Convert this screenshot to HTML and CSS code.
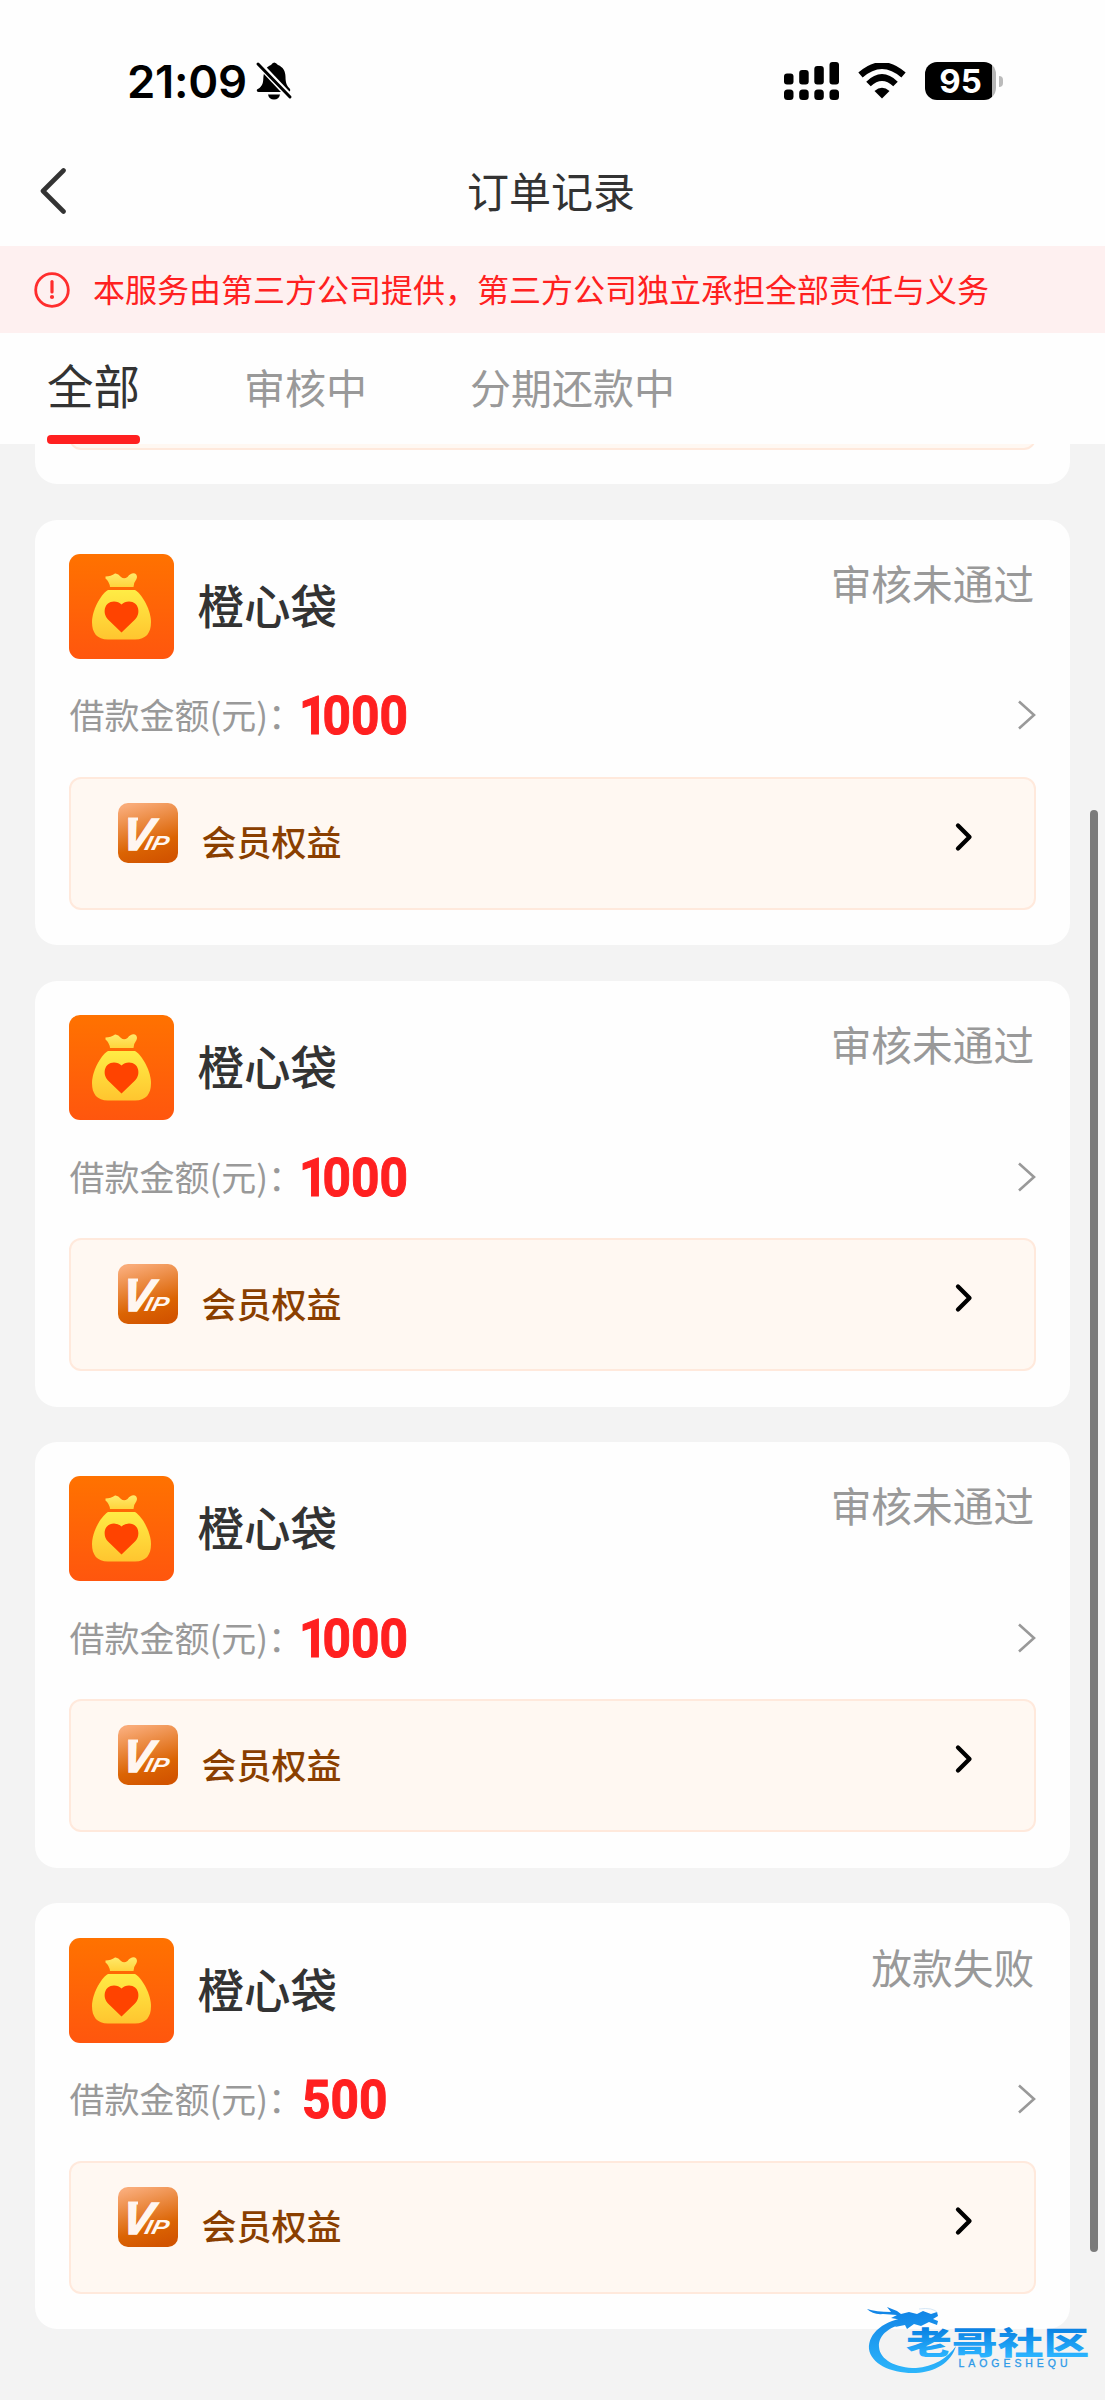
FILE: index.html
```html
<!DOCTYPE html>
<html lang="zh-CN">
<head>
<meta charset="utf-8">
<title>订单记录</title>
<link rel="stylesheet" href="styles.css">
</head>
<body>
<svg class="defs" width="0" height="0" aria-hidden="true">
  <defs>
    <linearGradient id="tile" x1="0" y1="0" x2="0" y2="1"><stop offset="0" stop-color="#ff7200"/><stop offset="1" stop-color="#ff560e"/></linearGradient>
    <linearGradient id="gold" x1="0" y1="0" x2="0" y2="1"><stop offset="0" stop-color="#ffec45"/><stop offset="1" stop-color="#ffc52f"/></linearGradient>
    <linearGradient id="tie" x1="0" y1="0" x2="0" y2="1"><stop offset="0" stop-color="#ffe96a"/><stop offset="1" stop-color="#ffd43c"/></linearGradient>
    <linearGradient id="vip" x1=".3" y1="0" x2=".6" y2="1"><stop offset="0" stop-color="#f9ab78"/><stop offset=".7" stop-color="#db6403"/><stop offset="1" stop-color="#d25400"/></linearGradient>
    <linearGradient id="blue" gradientUnits="userSpaceOnUse" x1="0" y1="10" x2="0" y2="72"><stop offset="0" stop-color="#1184e6"/><stop offset="1" stop-color="#2cb5fb"/></linearGradient>
    <linearGradient id="word" gradientUnits="userSpaceOnUse" x1="0" y1="-27" x2="0" y2="3"><stop offset="0" stop-color="#077de0"/><stop offset="1" stop-color="#2bb4ff"/></linearGradient>
  </defs>
  <symbol id="bag" viewBox="0 0 105 105">
    <rect width="105" height="105" rx="11" fill="url(#tile)"/>
    <path d="M36.500 22.500Q42 22.500 46 19.500Q49 19 52 23Q55 25.500 58.500 23Q62 18.500 66 19.500Q69 21.500 67.500 25Q65 28 64.500 33H41Q40.500 28 36.500 24.500Z" fill="url(#tie)"/>
    <path d="M39 36H66C74 41 82 57 82 68C82 79 77 85.500 66 85.500H39C28 85.500 23 79 23 68C23 57 31 41 39 36Z" fill="url(#gold)"/>
    <path d="M52.500 78.500L39 65.500C33 59.500 35 47.500 45 47.500Q49.500 47.500 52.500 50.500Q55.500 47.500 60 47.500C70 47.500 72 59.500 66 65.500Z" fill="#ff4300"/>
  </symbol>
  <symbol id="arrow" viewBox="0 0 20 32"><path d="M3 2.500L18 16L3 29.500" fill="none" stroke="#999" stroke-width="2.600"/></symbol>
  <symbol id="arrow-bold" viewBox="0 0 20 32"><path d="M4 4.500L15.500 16L4 27.500" fill="none" stroke="#000" stroke-width="4.300" stroke-linecap="round" stroke-linejoin="round"/></symbol>
</svg>

<header class="status">
  <span class="clock">21:09</span>
  <svg class="bell" viewBox="0 0 38 40">
    <path d="M4.500 27C9 23 8 19 8.500 15C9.500 8 13 5 16 4Q19 -1 23 4C28 6 30.500 10 30.500 16C30.500 22 32 25 35 28Q36 31 33 31H5Q1 31 2 28.500Z"/>
    <path d="M13 33.500H25Q24 38.500 19 38.500T13 33.500Z"/>
    <path d="M3 2L37 38" stroke="#fff" stroke-width="6.500"/>
    <path d="M3 3L35 36" stroke="#000" stroke-width="3" stroke-linecap="round"/>
  </svg>
  <svg class="signal" viewBox="0 0 56 38">
    <rect y="11.500" width="9.500" height="11" rx="3"/><rect x="15.200" y="8" width="9.500" height="14.500" rx="3"/><rect x="30.300" y="4" width="9.500" height="18.500" rx="3"/><rect x="45.500" width="9.500" height="22.500" rx="3"/>
    <rect y="27.500" width="9.500" height="10.500" rx="3.500"/><rect x="15.200" y="27.500" width="9.500" height="10.500" rx="3.500"/><rect x="30.300" y="27.500" width="9.500" height="10.500" rx="3.500"/><rect x="45.500" y="27.500" width="9.500" height="10.500" rx="3.500"/>
  </svg>
  <svg class="wifi" viewBox="0 0 48 36">
    <path d="M2.500 12Q24 -7 45.500 12" fill="none" stroke="#000" stroke-width="6.500"/>
    <path d="M10.500 21Q24 8 37.500 21" fill="none" stroke="#000" stroke-width="6.500"/>
    <path d="M24 35.500L16.500 28Q24 21.500 31.500 28Z"/>
  </svg>
  <div class="battery"><span class="battery-level">95</span><i class="battery-nub"></i></div>
</header>

<nav class="nav">
  <svg class="back" viewBox="0 0 28 46"><path d="M24.500 2.500L4 23L24.500 43.500" fill="none" stroke="#333" stroke-width="4.600" stroke-linecap="round" stroke-linejoin="round"/></svg>
  <h1 class="title">订单记录</h1>
</nav>

<div class="notice">
  <svg class="notice-icon" viewBox="0 0 36 36"><circle cx="18" cy="18" r="16.300" fill="none" stroke="#ff2d2d" stroke-width="2.800"/><path d="M18 9.500V20" stroke="#ff2d2d" stroke-width="3.200" stroke-linecap="round"/><circle cx="18" cy="25" r="2.100" fill="#ff2d2d"/></svg>
  <span class="notice-text">本服务由第三方公司提供，第三方公司独立承担全部责任与义务</span>
</div>

<div class="tabs">
  <a class="tab tab-active">全部</a>
  <a class="tab">审核中</a>
  <a class="tab">分期还款中</a>
</div>

<main class="list">
  <section class="card card-cut"><div class="benefit"></div></section>

  <section class="card">
    <div class="head"><svg class="logo"><use href="#bag"/></svg><h2 class="name">橙心袋</h2><span class="state">审核未通过</span></div>
    <div class="loan"><span class="label">借款金额(元)：</span><b class="sum sum-one">1000</b><svg class="more"><use href="#arrow"/></svg></div>
    <div class="benefit">
      <svg class="badge" viewBox="0 0 60 60"><rect width="60" height="60" rx="10" fill="url(#vip)"/><path d="M10 14.500h10v3H11z" fill="#fff6f0"/><text class="vip-text" transform="translate(2.500 46.500) skewX(-9)"><tspan class="vip-v">V</tspan></text><text class="vip-text vip-ip" transform="translate(25.500 46.500) skewX(-14) scale(1.22 1)">IP</text></svg>
      <span class="benefit-text">会员权益</span><svg class="go"><use href="#arrow-bold"/></svg>
    </div>
  </section>

  <section class="card">
    <div class="head"><svg class="logo"><use href="#bag"/></svg><h2 class="name">橙心袋</h2><span class="state">审核未通过</span></div>
    <div class="loan"><span class="label">借款金额(元)：</span><b class="sum sum-one">1000</b><svg class="more"><use href="#arrow"/></svg></div>
    <div class="benefit">
      <svg class="badge" viewBox="0 0 60 60"><rect width="60" height="60" rx="10" fill="url(#vip)"/><path d="M10 14.500h10v3H11z" fill="#fff6f0"/><text class="vip-text" transform="translate(2.500 46.500) skewX(-9)"><tspan class="vip-v">V</tspan></text><text class="vip-text vip-ip" transform="translate(25.500 46.500) skewX(-14) scale(1.22 1)">IP</text></svg>
      <span class="benefit-text">会员权益</span><svg class="go"><use href="#arrow-bold"/></svg>
    </div>
  </section>

  <section class="card">
    <div class="head"><svg class="logo"><use href="#bag"/></svg><h2 class="name">橙心袋</h2><span class="state">审核未通过</span></div>
    <div class="loan"><span class="label">借款金额(元)：</span><b class="sum sum-one">1000</b><svg class="more"><use href="#arrow"/></svg></div>
    <div class="benefit">
      <svg class="badge" viewBox="0 0 60 60"><rect width="60" height="60" rx="10" fill="url(#vip)"/><path d="M10 14.500h10v3H11z" fill="#fff6f0"/><text class="vip-text" transform="translate(2.500 46.500) skewX(-9)"><tspan class="vip-v">V</tspan></text><text class="vip-text vip-ip" transform="translate(25.500 46.500) skewX(-14) scale(1.22 1)">IP</text></svg>
      <span class="benefit-text">会员权益</span><svg class="go"><use href="#arrow-bold"/></svg>
    </div>
  </section>

  <section class="card">
    <div class="head"><svg class="logo"><use href="#bag"/></svg><h2 class="name">橙心袋</h2><span class="state">放款失败</span></div>
    <div class="loan"><span class="label">借款金额(元)：</span><b class="sum">500</b><svg class="more"><use href="#arrow"/></svg></div>
    <div class="benefit">
      <svg class="badge" viewBox="0 0 60 60"><rect width="60" height="60" rx="10" fill="url(#vip)"/><path d="M10 14.500h10v3H11z" fill="#fff6f0"/><text class="vip-text" transform="translate(2.500 46.500) skewX(-9)"><tspan class="vip-v">V</tspan></text><text class="vip-text vip-ip" transform="translate(25.500 46.500) skewX(-14) scale(1.22 1)">IP</text></svg>
      <span class="benefit-text">会员权益</span><svg class="go"><use href="#arrow-bold"/></svg>
    </div>
  </section>
</main>

<i class="scrollbar"></i>
<svg class="watermark" viewBox="0 0 225 80">
  <path d="M42 17C17 20 1 33 2 49C4 64 25 74 49 73C68 72 84 63 89 46C81 58 66 67 49 68C29 68 13 60 12 47C11 35 23 25 45 22Z" fill="url(#blue)"/>
  <path d="M0 9Q9 12 24 12L20 7L30 11L34 14L42 12L50 14L56 11L64 14L70 12L71 16L66 19L71 21L70 25L62 22L54 26L47 24L40 29L38 25L28 27L35 20L24 18L30 15L16 14Q6 15 0 9Z" fill="url(#blue)"/>
  <path d="M52 9Q66 7 71 13" fill="none" stroke="#c9dff2" stroke-width=".8"/>
  <text class="mark-cn" transform="translate(39 53.500) scale(1.48 1)" fill="url(#word)">老哥社区</text>
  <text class="mark-en" x="91.500" y="66.500" textLength="109">LAOGESHEQU</text>
</svg>
</body>
</html>
```
FILE: styles.css
```css
* { box-sizing: border-box; }
body {
  margin: 0;
  width: 1105px;
  height: 2400px;
  overflow: hidden;
  position: relative;
  background: #f3f3f3;
  color: #333;
  font-family: "Noto Sans CJK SC", sans-serif;
}
svg { display: block; flex: none; }
.defs { position: absolute; }
h1, h2 { margin: 0; font-weight: 400; }

.status {
  display: flex;
  align-items: center;
  height: 140px;
  padding: 22px 102px 0 127px;
  background: #fefefe;
}
.clock {
  width: 128px;
  margin-top: 2px;
  font: 600 45.5px/60px Inter, sans-serif;
  letter-spacing: -.3px;
  color: #000;
}
.bell { width: 38px; height: 40px; }
.signal { width: 56px; height: 38px; margin-left: auto; }
.wifi { width: 48px; height: 36px; margin-left: 18px; }
.battery { display: flex; align-items: center; gap: 3px; margin-left: 19px; }
.battery-level {
  width: 71px;
  height: 38px;
  border-radius: 12px;
  background: linear-gradient(90deg, #000 67px, #b5b5b5 67px);
  color: #fff;
  font: 700 33px/38px Inter, sans-serif;
  text-align: center;
}
.battery-nub { width: 4px; height: 11px; border-radius: 0 4px 4px 0; background: #bbb; }

.nav {
  display: grid;
  grid-template-columns: 66px 1fr 66px;
  align-items: center;
  height: 106px;
  background: #fefefe;
}
.back { width: 28px; height: 46px; margin: -4px 0 0 39px; }
.title { font-size: 42px; line-height: 60px; text-align: center; margin: -7px 3px 0 0; }

.notice {
  display: flex;
  align-items: center;
  gap: 23px;
  height: 87px;
  padding-left: 34px;
  background: #fef0f0;
  color: #ff2020;
  font-size: 32px;
  line-height: 50px;
  white-space: nowrap;
}
.notice-text { margin-top: -4px; }
.notice-icon { width: 36px; height: 36px; }

.tabs {
  display: flex;
  height: 111px;
  padding-left: 47px;
  background: #fefefe;
  color: #999;
}
.tab { font-size: 41px; line-height: 60px; padding-top: 23px; margin-right: 103px; white-space: nowrap; }
.tab-active {
  font-size: 46.5px;
  padding-top: 21px;
  margin-right: 104px;
  color: #333;
  display: flex;
  flex-direction: column;
  justify-content: space-between;
}
.tab-active::after { content: ""; height: 9px; border-radius: 4px; background: #ff2020; }

.list { display: flex; flex-direction: column; gap: 35.4px; padding: 0 35px; }
.card { height: 425.8px; padding: 34.4px; border-radius: 22px; background: #fefefe; }
.card-cut {
  display: flex;
  flex-direction: column;
  justify-content: flex-end;
  height: 40.2px;
  padding-top: 0;
  border-radius: 0 0 22px 22px;
  overflow: hidden;
}
.head { display: flex; height: 105px; }
.logo { width: 105px; height: 105px; }
.name { margin: 20px 0 0 23px; font-size: 46.5px; line-height: 60px; font-weight: 500; }
.state { margin: 1px 1.5px 0 auto; font-size: 40.7px; line-height: 56px; color: #999; }
.loan { display: flex; align-items: center; height: 118px; }
.label { width: 233px; margin-top: -7px; font-size: 35px; line-height: 50px; white-space: nowrap; color: #999; }
.sum {
  margin-top: -3px;
  font: 700 54px/60px Roboto, sans-serif;
  color: #ff2020;
  -webkit-text-stroke: 1px #ff2020;
  transform: scaleX(.92);
  transform-origin: left;
}
/* the leading digit 1 sits closer to its neighbour */
.sum-one { margin-left: -3px; }
.sum-one::first-letter { letter-spacing: -5.5px; }
.more { width: 20px; height: 32px; margin: -5px 0 0 auto; }
.benefit {
  display: flex;
  flex: none;
  height: 133px;
  padding: 24px 60px 0 47px;
  border: 2px solid #ffe9dc;
  border-radius: 12px;
  background: #fff8f2;
}
.badge { width: 60px; height: 60px; }
.benefit-text { margin: 13.5px 0 0 23px; font-size: 35px; line-height: 50px; font-weight: 500; color: #8a3f00; }
.go { width: 20px; height: 32px; margin: 18px 0 0 auto; }
.vip-text { font: italic 700 20.5px "Liberation Sans", sans-serif; fill: #fff6f0; }
.vip-v { font-size: 45px; stroke: #fff6f0; stroke-width: 1.6px; }

.scrollbar { position: absolute; left: 1090px; top: 810px; width: 7.5px; height: 1442px; border-radius: 4px; background: #7b7b7b; }
.watermark { position: absolute; left: 867px; top: 2300px; width: 225px; height: 80px; }
.mark-cn { font: 900 31px "Noto Sans CJK SC", sans-serif; }
.mark-en { font: 400 10.5px "Liberation Sans", sans-serif; fill: #2e9ae8; stroke: #2e9ae8; stroke-width: .3; }
```
